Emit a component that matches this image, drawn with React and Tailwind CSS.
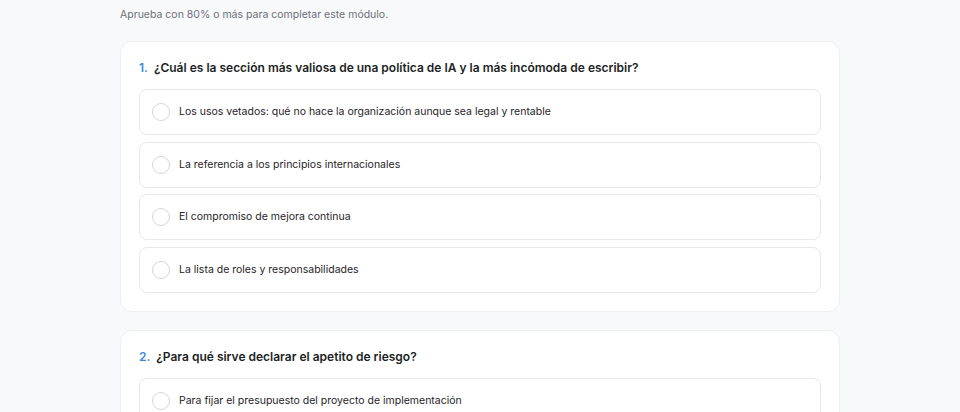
const QUESTIONS = [
    {
        n: 1,
        text: "¿Cuál es la sección más valiosa de una política de IA y la más incómoda de escribir?",
        options: [
            "Los usos vetados: qué no hace la organización aunque sea legal y rentable",
            "La referencia a los principios internacionales",
            "El compromiso de mejora continua",
            "La lista de roles y responsabilidades",
        ],
    },
    {
        n: 2,
        text: "¿Para qué sirve declarar el apetito de riesgo?",
        options: [
            "Para fijar el presupuesto del proyecto de implementación",
            "Para delimitar cuánto riesgo acepta la organización",
            "Para cumplir un requisito formal",
            "Para evitar auditorías",
        ],
    },
]

function Option({label}) {
    return (
        <label className="flex items-center gap-[9px] h-[46px] px-[12px] bg-white border border-[#e7e8eb] rounded-lg cursor-pointer hover:border-gray-300">
            <span className="w-[18px] h-[18px] shrink-0 rounded-full border-[1.5px] border-[#d4d6da] bg-white"/>
            <span className="text-[10.5px] text-[#1f2328]">{label}</span>
        </label>
    )
}

function QuestionCard({q}) {
    return (
        <div className="bg-white border border-[#eceef0] rounded-xl px-[18px] pt-[16px] pb-[18px]">
            <h3 className="text-[12px] leading-5 font-semibold text-[#1c1f24] mb-[11px]">
                <span className="text-[#3b87d4] mr-[6px]">{q.n}.</span>
                {q.text}
            </h3>
            <div className="flex flex-col gap-[6.5px]">
                {q.options.map((o) => (
                    <Option key={o} label={o}/>
                ))}
            </div>
        </div>
    )
}

export default function App() {
    return (
        <div className="min-h-screen bg-[#f8f9fa] font-['Inter','Liberation_Sans',sans-serif]">
            <div className="w-[720px] mx-auto pt-[7px]">
                <p className="text-[10.5px] leading-4 text-[#6b7079] mb-[18px]">
                    Aprueba con 80% o más para completar este módulo.
                </p>
                <div className="flex flex-col gap-[18px]">
                    {QUESTIONS.map((q) => (
                        <QuestionCard key={q.n} q={q}/>
                    ))}
                </div>
            </div>
        </div>
    )
}
